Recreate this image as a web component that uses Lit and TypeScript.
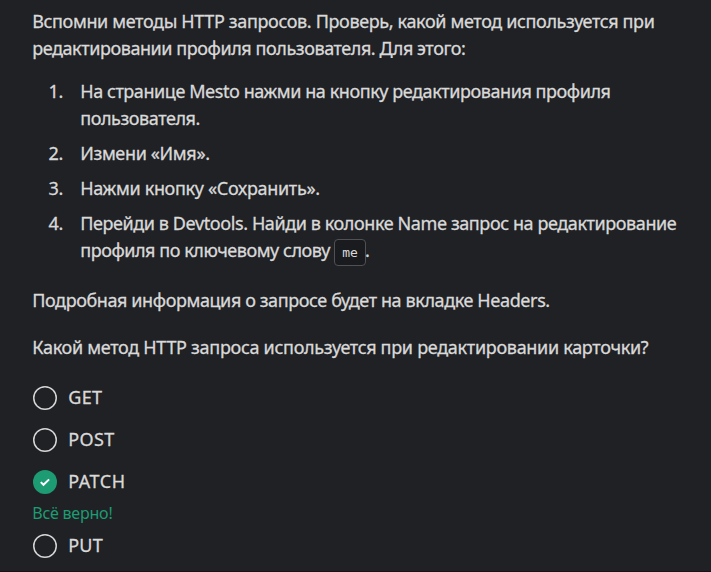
import { LitElement, html, css, svg } from "lit";
import { styleMap } from "lit/directives/style-map.js";

type Line = [text: string, tracking: number];

const intro: Line[] = [
  ["Вспомни методы HTTP запросов. Проверь, какой метод используется при", -0.355],
  ["редактировании профиля пользователя. Для этого:", -0.43],
];

const steps: { lines: Line[]; code?: string }[] = [
  {
    lines: [
      ["На странице Mesto нажми на кнопку редактирования профиля", -0.43],
      ["пользователя.", -0.43],
    ],
  },
  { lines: [["Измени «Имя».", -0.35]] },
  { lines: [["Нажми кнопку «Сохранить».", -0.32]] },
  {
    lines: [
      ["Перейди в Devtools. Найди в колонке Name запрос на редактирование", -0.41],
      ["профиля по ключевому слову", -0.45],
    ],
    code: "me",
  },
];

const info: Line = ["Подробная информация о запросе будет на вкладке Headers.", -0.4];
const question: Line = ["Какой метод HTTP запроса используется при редактировании карточки?", -0.3];

const options: { label: Line; correct?: boolean; note?: Line }[] = [
  { label: ["GET", 0.4] },
  { label: ["POST", 0.4] },
  { label: ["PATCH", 0.55], correct: true, note: ["Всё верно!", -0.2] },
  { label: ["PUT", 0.2] },
];

const line = ([text, tracking]: Line) =>
  html`<span class="line" style=${styleMap({ letterSpacing: `${tracking}px` })}>${text}</span>`;

class AppRoot extends LitElement {
  static styles = css`
    :host {
      display: block;
      box-sizing: border-box;
      height: 572px;
      overflow: hidden;
      padding: 8px 33px 0;
      background: #202125;
      color: #d9d9d9;
      border-bottom: 1px solid #1a1116;
      font: 400 18px/27px "Noto Sans", "Open Sans", sans-serif;
      -webkit-text-stroke: 0.3px currentColor;
    }
    p, ol { margin: 0; padding: 0; }
    .line { white-space: nowrap; margin-left: -0.8px; }
    .row { display: block; height: 27px; white-space: nowrap; }
    ol { list-style: none; margin-top: 16px; display: flex; flex-direction: column; gap: 8px; }
    li { display: grid; grid-template-columns: 30px 1fr; column-gap: 18px; }
    .num { text-align: right; letter-spacing: -0.3px; }
    code {
      display: inline-block;
      box-sizing: border-box;
      width: 32px;
      height: 27px;
      margin: 0 -1px 0 4px;
      border: 1px solid #505154;
      border-radius: 4px;
      background: #1a1b1e;
      font: 13px/26px "DejaVu Sans Mono", monospace;
      text-align: center;
      vertical-align: middle;
      -webkit-text-stroke: 0;
    }
    .info { margin-top: 23px; }
    .question { margin-top: 20px; }
    .options { margin-top: 25px; display: flex; flex-direction: column; }
    .option { display: flex; align-items: center; height: 24px; margin-bottom: 18px; }
    .option svg { width: 24px; height: 24px; margin-right: 12px; flex: none; }
    .option .line { padding-bottom: 2px; }
    .note { height: 20px; margin: -9px 0 11px; color: #1d9c73; font-size: 16px; line-height: 20px; -webkit-text-stroke: 0; }
  `;

  render() {
    return html`
      <p>${intro.map((l) => html`<span class="row">${line(l)}</span>`)}</p>
      <ol>
        ${steps.map(
          (s, i) => html`<li>
            <span class="num">${i + 1}.</span>
            <div>
              ${s.lines.map(
                (l, n) => html`<span class="row">${line(l)}${s.code && n === s.lines.length - 1 ? html`<code>${s.code}</code>.` : ""}</span>`
              )}
            </div>
          </li>`
        )}
      </ol>
      <p class="info">${line(info)}</p>
      <p class="question">${line(question)}</p>
      <div class="options">
        ${options.map(
          (o) => html`<div class="option">
              <svg viewBox="0 0 24 24" fill="none">
                ${o.correct
                  ? svg`<circle cx="12" cy="12" r="12" fill="#1d9c73"/><path d="M7.8 12.1l2.7 2.7 5.6-5.4" stroke="#fff" stroke-width="2"/>`
                  : svg`<circle cx="12" cy="12" r="11.25" stroke="#d6d6d6" stroke-width="1.5"/>`}
              </svg>
              ${line(o.label)}
            </div>
            ${o.note ? html`<div class="note">${line(o.note)}</div>` : ""}`
        )}
      </div>
    `;
  }
}
customElements.define("app-root", AppRoot);
